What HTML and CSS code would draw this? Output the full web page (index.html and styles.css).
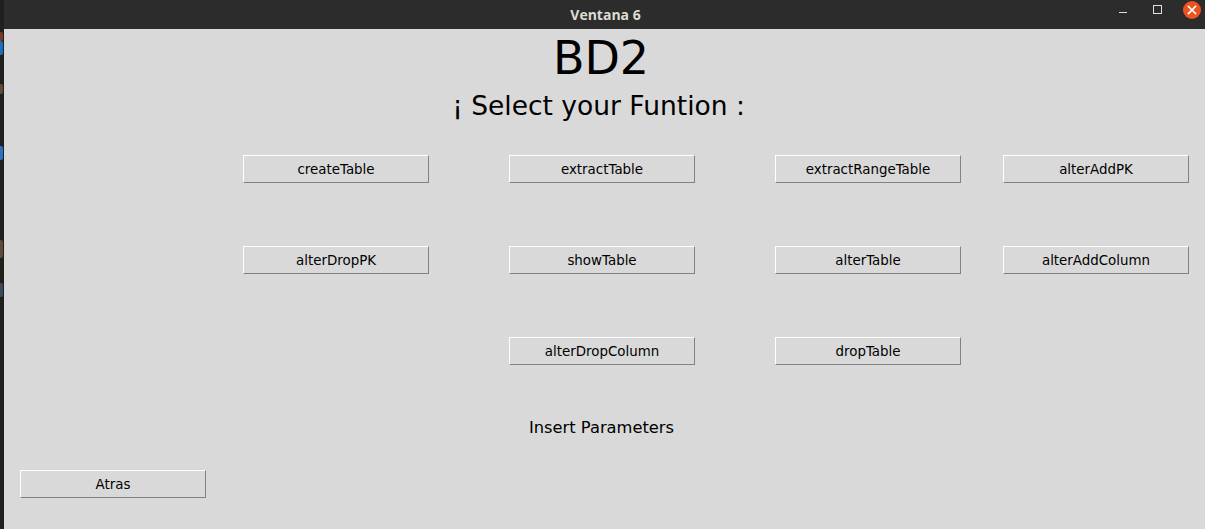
FILE: index.html
```html
<!DOCTYPE html>
<html lang="es">
<head>
<meta charset="utf-8">
<title>Ventana 6</title>
<link rel="stylesheet" href="styles.css">
</head>
<body>
<div class="screen">
  <div class="desk-strip">
    <span class="speck speck-red"></span>
    <span class="speck speck-blue"></span>
    <span class="speck speck-brown"></span>
    <span class="speck speck-blue2"></span>
    <span class="speck speck-brown2"></span>
    <span class="speck speck-slate"></span>
  </div>
  <div class="window">
    <div class="titlebar">
      <span class="title">Ventana 6</span>
      <div class="controls">
        <span class="ctl ctl-min"><span class="min-line"></span></span>
        <span class="ctl ctl-max"><span class="max-box"></span></span>
        <span class="ctl ctl-close">
          <svg width="18" height="18" viewBox="0 0 18 18"><circle cx="9" cy="9" r="9" fill="#e95420"/><path d="M5.5 5.5 L12.5 12.5 M12.5 5.5 L5.5 12.5" stroke="#fff" stroke-width="1.6" stroke-linecap="square"/></svg>
        </span>
      </div>
    </div>
    <div class="content">
      <h1 class="heading">BD2</h1>
      <h2 class="subheading">¡ Select your Funtion :</h2>
      <div class="grid">
        <button class="btn c1">createTable</button>
        <button class="btn c3">extractTable</button>
        <button class="btn c5">extractRangeTable</button>
        <button class="btn c7">alterAddPK</button>
        <button class="btn c1">alterDropPK</button>
        <button class="btn c3">showTable</button>
        <button class="btn c5">alterTable</button>
        <button class="btn c7">alterAddColumn</button>
        <button class="btn c3">alterDropColumn</button>
        <button class="btn c5">dropTable</button>
      </div>
      <p class="params">Insert Parameters</p>
      <button class="btn back">Atras</button>
    </div>
  </div>
</div>
</body>
</html>
```

FILE: styles.css
```css
* { box-sizing: border-box; }
html, body { margin: 0; padding: 0; }
body {
  width: 1205px;
  height: 529px;
  overflow: hidden;
  background: #d9d9d9;
  font-family: "DejaVu Sans", "Liberation Sans", sans-serif;
}
.screen {
  display: flex;
  width: 1205px;
  height: 529px;
}
.desk-strip {
  width: 4px;
  flex: none;
  background: #1f1f1c;
  position: relative;
}
.speck { position: absolute; left: 0; width: 3px; border-radius: 0 2px 2px 0; }
.speck-red { top: 32px; height: 9px; background: #7a3a2a; }
.speck-blue { top: 41px; height: 14px; background: #1a6fc0; }
.speck-brown { top: 84px; height: 10px; background: #5e4a36; }
.speck-blue2 { top: 146px; height: 14px; background: #2a72c0; }
.speck-brown2 { top: 240px; height: 18px; background: #5e4a36; }
.speck-slate { top: 283px; height: 14px; background: #3b4b5a; }

.window {
  flex: 1;
  display: flex;
  flex-direction: column;
}
.titlebar {
  height: 29px;
  flex: none;
  background: #2c2c2c;
  position: relative;
  display: flex;
  align-items: center;
  justify-content: center;
}
.title {
  font-family: "Open Sans", "DejaVu Sans", sans-serif;
  font-weight: 700;
  font-size: 14px;
  color: #dfdbd2;
  padding-left: 2px;
  margin-top: -1px;
}
.controls {
  position: absolute;
  right: 4px;
  top: 1px;
  display: flex;
  align-items: center;
  height: 18px;
}
.ctl { display: flex; align-items: center; justify-content: center; }
.ctl-min { width: 8px; height: 18px; margin-right: 26px; }
.min-line { width: 8px; height: 1px; background: #e0e0e0; margin-top: 5px; }
.ctl-max { width: 9px; height: 18px; margin-right: 21px; }
.max-box { width: 9px; height: 9px; border: 1px solid #e0e0e0; margin-top: -1px; }
.ctl-close { width: 18px; height: 18px; }
.ctl-close svg { display: block; }

.content {
  flex: 1;
  background: #d9d9d9;
  display: flex;
  flex-direction: column;
}
.heading {
  margin: 2px 7px 0 0;
  font-weight: 400;
  font-size: 46px;
  line-height: 54px;
  text-align: center;
  color: #000;
}
.subheading {
  margin: 6px 12px 0 0;
  font-weight: 400;
  font-size: 26.5px;
  line-height: 30px;
  text-align: center;
  color: #000;
}
.grid {
  margin-top: 34px;
  padding-left: 239px;
  display: grid;
  grid-template-columns: 186px 80px 186px 80px 186px 42px 186px;
  grid-auto-rows: 28px;
  row-gap: 63px;
}
.c1 { grid-column: 1; }
.c3 { grid-column: 3; }
.c5 { grid-column: 5; }
.c7 { grid-column: 7; }
.btn {
  height: 28px;
  width: 186px;
  padding: 0;
  margin: 0;
  background: #d9d9d9;
  border-style: solid;
  border-width: 1px;
  border-color: #ffffff #828282 #828282 #ffffff;
  font-family: "DejaVu Sans", sans-serif;
  font-size: 13.4px;
  line-height: 15px;
  color: #000;
  text-align: center;
}
.params {
  margin: 53px 6px 0 0;
  font-size: 16.3px;
  line-height: 19px;
  text-align: center;
  color: #000;
}
.back {
  margin: 33px 0 0 16px;
}
```
